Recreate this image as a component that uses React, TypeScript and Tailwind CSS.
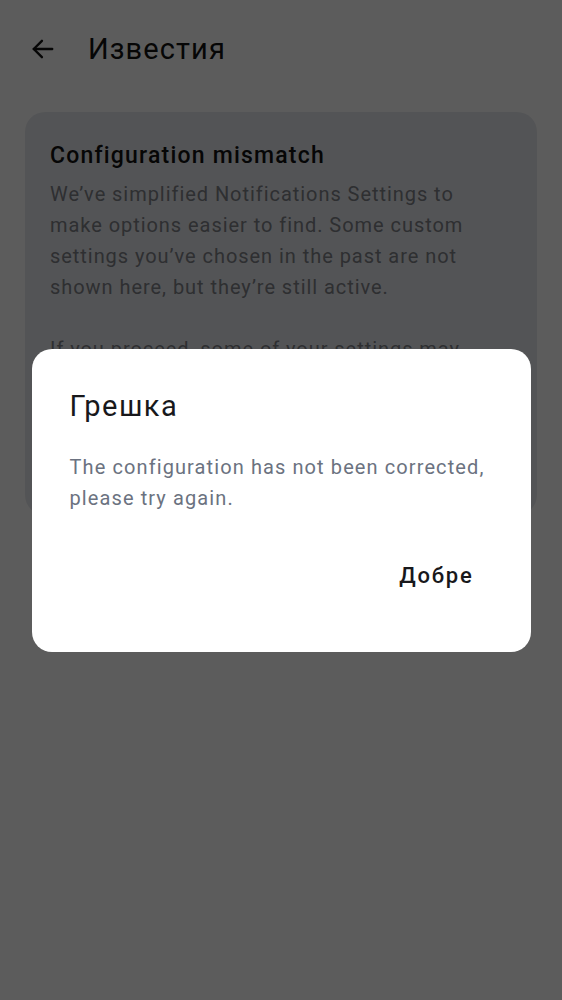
import { useState } from 'react'

function BackArrow() {
  return (
    <svg width="26" height="26" viewBox="0 0 24 24" fill="none" stroke="currentColor" strokeWidth="2.2" strokeLinecap="round" strokeLinejoin="round">
      <path d="M20.5 12H3.5" />
      <path d="M11 4.5L3.5 12L11 19.5" />
    </svg>
  )
}

export default function App() {
  const [open, setOpen] = useState(true)

  return (
    <div className="relative h-screen w-full overflow-hidden bg-white font-['Roboto',sans-serif] text-[#111111]">
      <header className="flex h-[100px] items-center px-[30px] pb-[2px]">
        <button className="flex h-[26px] w-[26px] items-center justify-center">
          <BackArrow />
        </button>
        <h1 className="ml-[32px] text-[29px] leading-[36px] font-normal tracking-[1.1px]">Известия</h1>
      </header>

      <main className="px-[25px] pt-[12px]">
        <section className="h-[403px] rounded-[20px] bg-[#e7e9ed] px-[25px] pt-[28px]">
          <h2 className="text-[23px] leading-[32px] font-medium tracking-[1.2px]">Configuration mismatch</h2>
          <p className="mt-[7px] text-[20px] leading-[31px] tracking-[0.95px] text-[#7f8289]">
            We’ve simplified Notifications Settings to make options easier to find. Some custom settings you’ve chosen in the past are not shown here, but they’re still active.
          </p>
          <p className="mt-[31px] text-[20px] leading-[31px] tracking-[0.95px] text-[#7f8289]">
            If you proceed, some of your settings may change to match the new options.
          </p>
        </section>
      </main>

      {open && (
        <div className="fixed inset-0 flex items-center justify-center bg-black/[0.64]">
          <div className="w-[499px] rounded-[20px] bg-white pl-[38px] pr-[38px] pt-[39px] pb-[59px]">
            <h3 className="text-[29px] leading-[36px] font-normal tracking-[1.5px] text-[#18181b]">Грешка</h3>
            <p className="mt-[28px] text-[20px] leading-[31px] tracking-[1.1px] text-[#6b7280]">
              The configuration has not been corrected, please try again.
            </p>
            <div className="mt-[45px] flex justify-end">
              <button
                onClick={() => setOpen(false)}
                className="mr-[19px] text-[22px] leading-[34px] font-medium tracking-[1.8px] text-[#18181b]"
              >
                Добре
              </button>
            </div>
          </div>
        </div>
      )}
    </div>
  )
}
